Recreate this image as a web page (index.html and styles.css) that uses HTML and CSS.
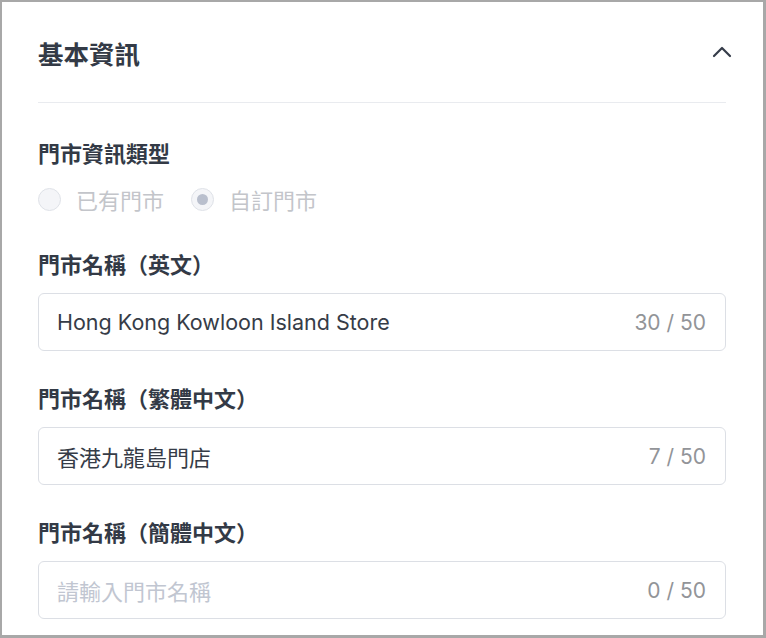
FILE: index.html
```html
<!DOCTYPE html>
<html lang="zh-Hant">
<head>
    <meta charset="UTF-8">
    <meta name="viewport" content="width=device-width, initial-scale=1.0">
    <title>基本資訊</title>
    <link rel="stylesheet" href="styles.css">
</head>
<body>
    <div class="panel">
        <div class="panel-header">
            <h2>基本資訊</h2>
            <svg class="chevron" width="20" height="12" viewBox="0 0 20 12">
                <path d="M2 10 L10 2 L18 10" fill="none" stroke="#353c49" stroke-width="2.2" stroke-linecap="round" stroke-linejoin="round"/>
            </svg>
        </div>

        <div class="panel-body">
            <div class="form-item">
                <div class="form-label">門市資訊類型</div>
                <div class="radio-group">
                    <label class="radio">
                        <span class="radio-dot"></span>
                        <span class="radio-text">已有門市</span>
                    </label>
                    <label class="radio checked">
                        <span class="radio-dot"></span>
                        <span class="radio-text">自訂門市</span>
                    </label>
                </div>
            </div>

            <div class="form-item">
                <div class="form-label">門市名稱（英文）</div>
                <div class="input">
                    <span class="input-value">Hong Kong Kowloon Island Store</span>
                    <span class="counter">30 / 50</span>
                </div>
            </div>

            <div class="form-item">
                <div class="form-label">門市名稱（繁體中文）</div>
                <div class="input">
                    <span class="input-value cjk">香港九龍島門店</span>
                    <span class="counter">7 / 50</span>
                </div>
            </div>

            <div class="form-item">
                <div class="form-label">門市名稱（簡體中文）</div>
                <div class="input">
                    <span class="input-value cjk placeholder">請輸入門市名稱</span>
                    <span class="counter">0 / 50</span>
                </div>
            </div>
        </div>
    </div>
</body>
</html>
```

FILE: styles.css
```css
* {
    margin: 0;
    padding: 0;
    box-sizing: border-box;
}

html, body {
    height: 100%;
}

body {
    font-family: 'Inter', 'Noto Sans CJK TC', sans-serif;
    background: #fff;
    color: #303642;
    overflow: hidden;
}

.panel {
    height: 638px;
    border-style: solid;
    border-color: #a8a8a8;
    border-width: 2px 3px 3px 2px;
    padding: 0 37px 0 36px;
    overflow: hidden;
}

.panel-header {
    display: flex;
    align-items: center;
    justify-content: space-between;
    padding: 34px 0 32px;
    border-bottom: 1px solid #e9ebef;
}

.panel-header h2 {
    font-family: 'Noto Sans CJK TC', sans-serif;
    font-size: 25.5px;
    line-height: 34px;
    font-weight: 600;
    color: #333a46;
}

.chevron {
    margin-right: -6px;
    margin-top: -2px;
}

.panel-body {
    display: flex;
    flex-direction: column;
    gap: 31px;
    padding-top: 34px;
}

.form-item {
    display: flex;
    flex-direction: column;
    gap: 15px;
}

.form-label {
    font-family: 'Noto Sans CJK TC', sans-serif;
    font-size: 22px;
    line-height: 30px;
    font-weight: 600;
    color: #333a46;
}

.radio-group {
    display: flex;
    gap: 27px;
    margin-top: 2px;
    margin-bottom: 3px;
}

.radio {
    display: flex;
    align-items: center;
    gap: 15px;
    height: 30px;
}

.radio-dot {
    width: 23px;
    height: 23px;
    border-radius: 50%;
    border: 1px solid #dfe2e8;
    background: #f4f5f8;
    display: flex;
    align-items: center;
    justify-content: center;
}

.radio.checked .radio-dot::after {
    content: "";
    width: 11px;
    height: 11px;
    border-radius: 50%;
    background: #b9bfcd;
}

.radio-text {
    font-family: 'Noto Sans CJK TC', sans-serif;
    font-size: 22px;
    color: #c3c5ca;
}

.input {
    height: 58px;
    border: 1px solid #dcdfe5;
    border-radius: 6px;
    display: flex;
    align-items: center;
    justify-content: space-between;
    padding: 0 19px 0 18px;
}

.input-value {
    font-size: 21.5px;
    color: #363c47;
}

.input-value.cjk {
    font-family: 'Noto Sans CJK TC', sans-serif;
    font-size: 22px;
}

.input-value.placeholder {
    color: #c1c6d1;
}

.counter {
    font-size: 21px;
    color: #929498;
}
```
